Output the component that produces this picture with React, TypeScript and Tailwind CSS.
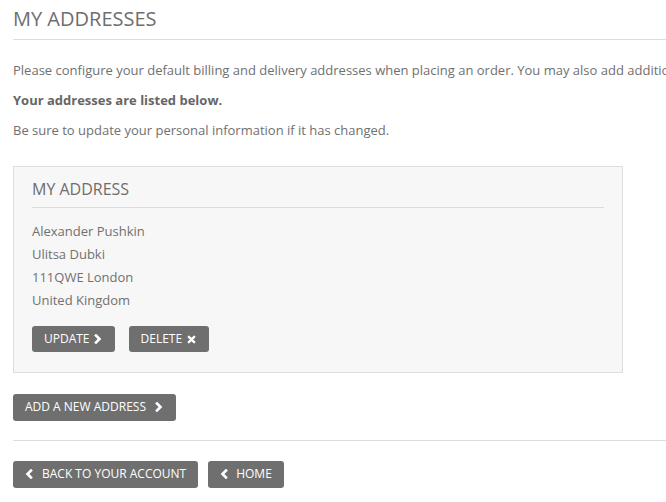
import React from 'react';

function ChevronRight({ className = '' }: { className?: string }) {
  return (
    <svg viewBox="0 0 8 10" className={className} width="8" height="10">
      <polyline points="2,1.5 5.5,5 2,8.5" fill="none" stroke="currentColor" strokeWidth="2.6" strokeLinecap="square" />
    </svg>
  );
}

function ChevronLeft({ className = '' }: { className?: string }) {
  return (
    <svg viewBox="0 0 8 10" className={className} width="8" height="10">
      <polyline points="6,1.5 2.5,5 6,8.5" fill="none" stroke="currentColor" strokeWidth="2.6" strokeLinecap="square" />
    </svg>
  );
}

function Times({ className = '' }: { className?: string }) {
  return (
    <svg viewBox="0 0 10 10" className={className} width="9" height="9">
      <path d="M2 2 L8 8 M8 2 L2 8" fill="none" stroke="currentColor" strokeWidth="2.6" strokeLinecap="round" />
    </svg>
  );
}

const btn = 'inline-flex items-center bg-[#6f6f6f] text-white text-[12px] leading-none rounded-[3px] uppercase';

export default function App() {
  const lines = ['Alexander Pushkin', 'Ulitsa Dubki', '111QWE London', 'United Kingdom'];

  return (
    <div className="w-[666px] h-[502px] overflow-hidden bg-white text-[#707070] font-['Open_Sans',sans-serif]">
      <div className="w-[900px] pl-[13px] pt-[7px]">
        <h1 className="text-[20px] leading-[24px] text-[#6e6e6e] pb-[8px] border-b border-[#dcdcdc]">MY ADDRESSES</h1>

        <div className="text-[13px] leading-[18px] mt-[21px] space-y-[12px] whitespace-nowrap">
          <p>Please configure your default billing and delivery addresses when placing an order. You may also add additional addresses, which can be useful for sending gifts.</p>
          <p className="font-bold text-[#666]">Your addresses are listed below.</p>
          <p>Be sure to update your personal information if it has changed.</p>
        </div>

        <div className="w-[610px] mt-[27px] border border-[#dedede] bg-[#f7f7f7] px-[18px] pt-[11px] pb-[20px]">
          <h3 className="text-[16px] leading-[22px] text-[#6e6e6e] pb-[7px] border-b border-[#dcdcdc]">MY ADDRESS</h3>
          <div className="mt-[12px] text-[13px] leading-[23px]">
            {lines.map(l => (
              <div key={l}>{l}</div>
            ))}
          </div>
          <div className="flex gap-[14px] mt-[14px]">
            <span className={`${btn} h-[26px] pl-[12px] pr-[13px] gap-[4px]`}>
              Update <ChevronRight />
            </span>
            <span className={`${btn} h-[26px] pl-[12px] pr-[13px] gap-[5px]`}>
              Delete <Times />
            </span>
          </div>
        </div>

        <div className="mt-[20px]">
          <span className={`${btn} h-[27px] pl-[12px] pr-[13px] gap-[9px]`}>
            Add a new address <ChevronRight />
          </span>
        </div>

        <div className="mt-[19px] border-t border-[#dcdcdc]" />

        <div className="flex gap-[10px] mt-[20px]">
          <span className={`${btn} h-[27px] pl-[12px] pr-[12px] gap-[9px]`}>
            <ChevronLeft /> Back to your account
          </span>
          <span className={`${btn} h-[27px] pl-[12px] pr-[12px] gap-[8px]`}>
            <ChevronLeft /> Home
          </span>
        </div>
      </div>
    </div>
  );
}
